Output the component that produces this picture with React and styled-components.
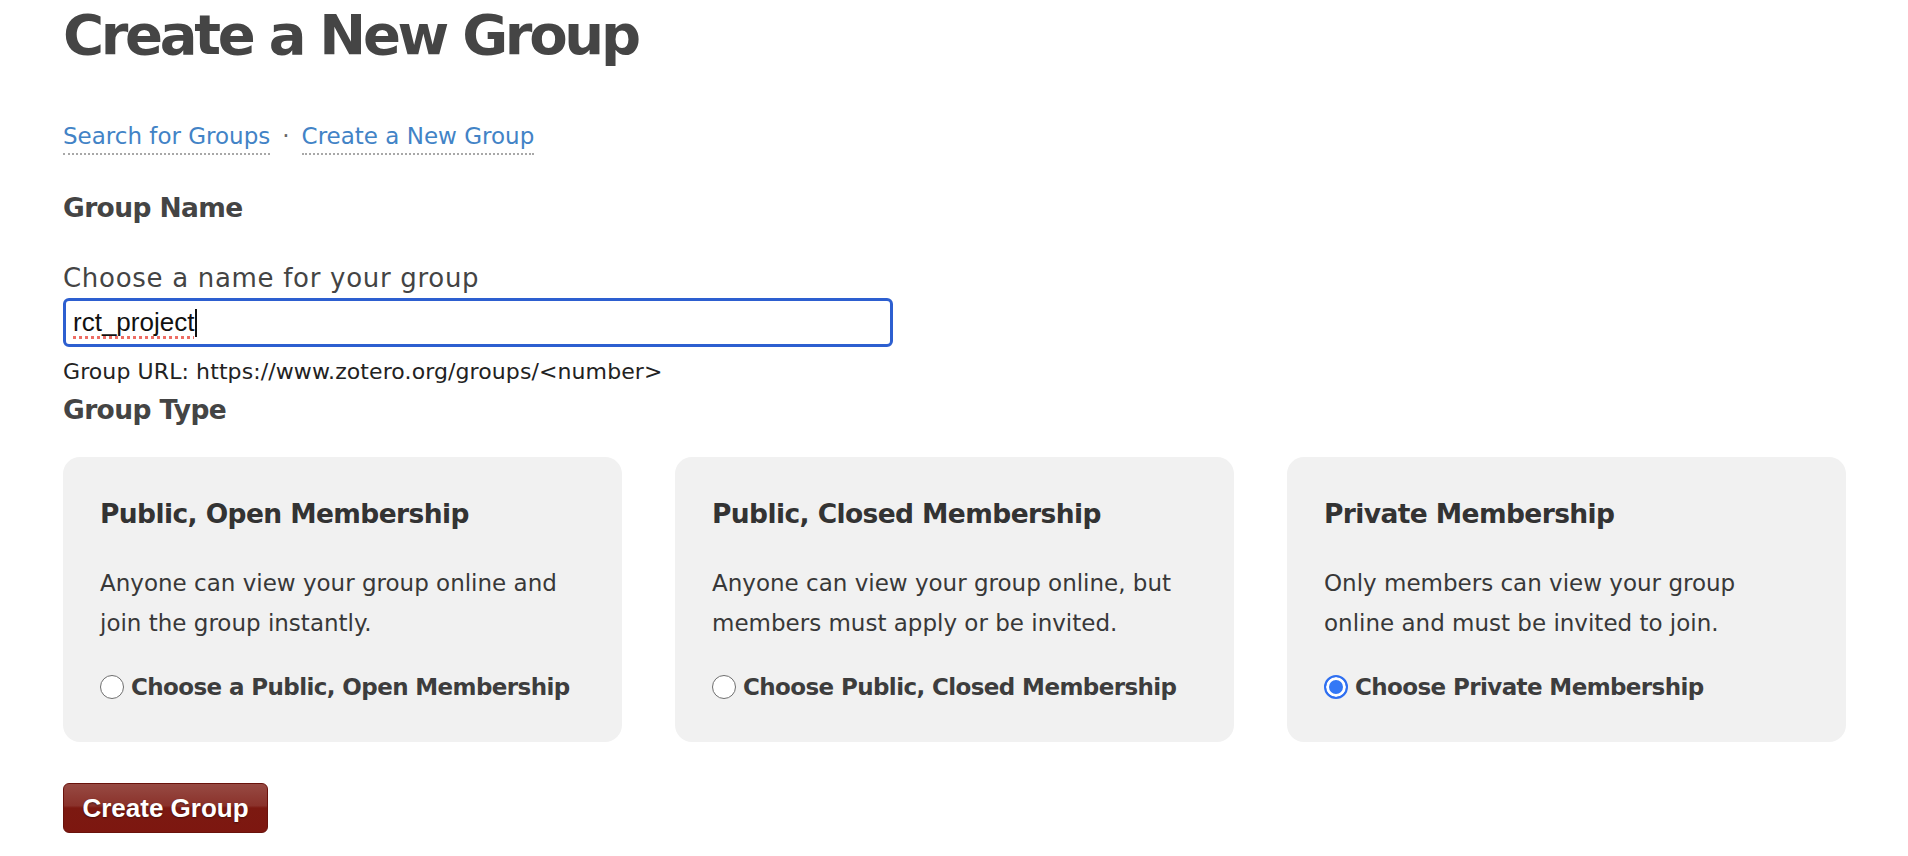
import React from "react";
import styled, { createGlobalStyle } from "styled-components";

const Global = createGlobalStyle`
  html, body { margin: 0; padding: 0; background: #fff; }
  body { font-family: "DejaVu Sans", Verdana, sans-serif; color: #444; }
`;

const Page = styled.main`
  padding: 0 62px 0 63px;
`;

const Title = styled.h1`
  margin: 3px 0 0;
  font-size: 56px;
  line-height: 64px;
  font-weight: bold;
  letter-spacing: -3.3px;
  color: #454545;
`;

const Nav = styled.nav`
  display: flex;
  align-items: flex-start;
  gap: 12px;
  margin-top: 54px;
  font-size: 23px;
  line-height: 30px;
`;

const NavLink = styled.a`
  display: inline-block;
  color: #4283c6;
  text-decoration: none;
  padding-bottom: 2px;
  border-bottom: 2px dotted #a8a8a8;
`;

const Sep = styled.span`
  color: #666;
`;

const SectionTitle = styled.h2`
  margin: ${(p) => p.$top}px 0 0;
  font-size: 26.5px;
  line-height: 30px;
  letter-spacing: -0.6px;
  font-weight: bold;
  color: #444;
`;

const Label = styled.label`
  display: block;
  margin-top: 39px;
  font-size: 26px;
  line-height: 32px;
  letter-spacing: 0.7px;
  color: #444;
`;

const TextField = styled.div`
  box-sizing: border-box;
  margin-top: 4px;
  width: 830px;
  height: 49px;
  border: 3px solid #2d5fd0;
  border-radius: 6px;
  padding: 0 7px;
  display: flex;
  align-items: center;
  font-family: "Liberation Sans", Arial, sans-serif;
  font-size: 26px;
  color: #111;
`;

const Misspelled = styled.span`
  text-decoration: underline dotted #ee6d64;
  text-decoration-thickness: 3px;
  text-underline-offset: 5px;
  text-decoration-skip-ink: none;
`;

const Caret = styled.span`
  display: inline-block;
  width: 2px;
  height: 28px;
  background: #111;
  margin-left: 1px;
`;

const Hint = styled.p`
  margin: 12px 0 0;
  font-size: 22px;
  line-height: 26px;
  letter-spacing: 0.1px;
  color: #222;
`;

const Cards = styled.div`
  margin-top: 32px;
  display: grid;
  grid-template-columns: repeat(3, 1fr);
  gap: 53px;
`;

const Card = styled.section`
  background: #f1f1f1;
  border-radius: 17px;
  padding: 42px 46px 40px 37px;
`;

const CardTitle = styled.h3`
  margin: 0;
  font-size: 26.5px;
  line-height: 30px;
  letter-spacing: -0.6px;
  font-weight: bold;
  color: #333;
`;

const CardText = styled.p`
  margin: 34px 0 0;
  font-size: 23px;
  line-height: 40px;
  color: #383838;
`;

const Choice = styled.label`
  display: flex;
  align-items: center;
  gap: 7px;
  margin-top: 29px;
  font-size: 23px;
  line-height: 30px;
  letter-spacing: -0.6px;
  font-weight: bold;
  color: #3d3d3d;
`;

const Radio = styled.input.attrs({ type: "radio" })`
  appearance: none;
  margin: 0;
  width: 24px;
  height: 24px;
  border-radius: 50%;
  box-sizing: border-box;
  border: 1.5px solid #6e6e6e;
  background: #fff;
  flex-shrink: 0;
  &:checked {
    border: 2px solid #2f6ff0;
    background: #3478f6;
    box-shadow: inset 0 0 0 3px #fff;
  }
`;

const SubmitButton = styled.button`
  margin-top: 41px;
  width: 205px;
  height: 50px;
  border: 1px solid #6a120c;
  border-radius: 6px;
  background: linear-gradient(
    to bottom,
    #974a43 0%,
    #8a322b 45%,
    #7c1911 50%,
    #7d1710 100%
  );
  color: #fff;
  font-family: "Liberation Sans", Arial, sans-serif;
  font-size: 26px;
  font-weight: bold;
  text-shadow: 0 1px 2px rgba(0, 0, 0, 0.45);
  cursor: pointer;
  padding: 0;
`;

const options = [
  {
    id: "open",
    title: "Public, Open Membership",
    text: "Anyone can view your group online and join the group instantly.",
    choice: "Choose a Public, Open Membership",
  },
  {
    id: "closed",
    title: "Public, Closed Membership",
    text: "Anyone can view your group online, but members must apply or be invited.",
    choice: "Choose Public, Closed Membership",
  },
  {
    id: "private",
    title: "Private Membership",
    text: "Only members can view your group online and must be invited to join.",
    choice: "Choose Private Membership",
  },
];

export default function App() {
  const [type, setType] = React.useState("private");
  return (
    <>
      <Global />
      <Page>
        <Title>Create a New Group</Title>
        <Nav>
          <NavLink href="#">Search for Groups</NavLink>
          <Sep>·</Sep>
          <NavLink href="#">Create a New Group</NavLink>
        </Nav>
        <SectionTitle $top={38}>Group Name</SectionTitle>
        <Label>Choose a name for your group</Label>
        <TextField role="textbox">
          <Misspelled>rct_project</Misspelled>
          <Caret />
        </TextField>
        <Hint>Group URL: https://www.zotero.org/groups/&lt;number&gt;</Hint>
        <SectionTitle $top={10}>Group Type</SectionTitle>
        <Cards>
          {options.map((o) => (
            <Card key={o.id}>
              <CardTitle>{o.title}</CardTitle>
              <CardText>{o.text}</CardText>
              <Choice>
                <Radio
                  name="type"
                  checked={type === o.id}
                  onChange={() => setType(o.id)}
                />
                {o.choice}
              </Choice>
            </Card>
          ))}
        </Cards>
        <SubmitButton>Create Group</SubmitButton>
      </Page>
    </>
  );
}
